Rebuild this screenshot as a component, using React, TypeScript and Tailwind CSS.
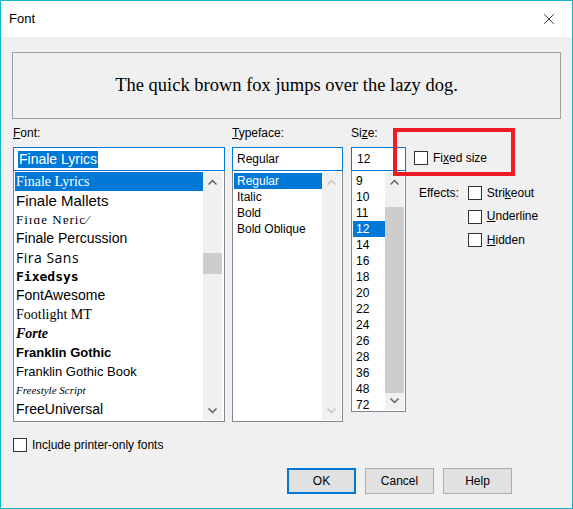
import { X } from 'lucide-react';

const UI = "font-['Liberation_Sans',Arial,sans-serif]";

const FONTS = [
    { name: 'Finale Lyrics', cls: "font-['Liberation_Serif',serif] text-[14px]", selected: true },
    { name: 'Finale Mallets', cls: "font-['Liberation_Sans',sans-serif] text-[15px]" },
    { name: 'Fiɪɑe Nɐric⁄', cls: "font-['Liberation_Serif',serif] text-[13px] tracking-[1px] leading-[11px]" },
    { name: 'Finale Percussion', cls: "font-['Liberation_Sans',sans-serif] text-[14px]" },
    { name: 'Fira Sans', cls: "font-['Open_Sans',sans-serif] text-[14px] tracking-[0.5px]" },
    { name: 'Fixedsys', cls: "font-['DejaVu_Sans_Mono',monospace] text-[13px] font-bold" },
    { name: 'FontAwesome', cls: "font-['Liberation_Sans',sans-serif] text-[14px]" },
    { name: 'Footlight MT', cls: "font-['Liberation_Serif',serif] text-[14px]" },
    { name: 'Forte', cls: "font-['Liberation_Serif',serif] text-[14px] font-bold italic" },
    { name: 'Franklin Gothic', cls: "font-['Liberation_Sans',sans-serif] text-[13px] font-bold" },
    { name: 'Franklin Gothic Book', cls: "font-['Liberation_Sans',sans-serif] text-[13px]" },
    { name: 'Freestyle Script', cls: "font-['Liberation_Serif',serif] text-[11px] italic" },
    { name: 'FreeUniversal', cls: "font-['Liberation_Sans',sans-serif] text-[14px]" },
];

const TYPEFACES = ['Regular', 'Italic', 'Bold', 'Bold Oblique'];
const SIZES = ['9', '10', '11', '12', '14', '16', '18', '20', '22', '24', '26', '28', '36', '48', '72'];

function Chevron({ up, disabled }: { up?: boolean; disabled?: boolean }) {
    return (
        <svg width="9" height="6" viewBox="0 0 9 6" className={up ? '' : 'rotate-180'}>
            <path d="M0.5 5.5 L4.5 1.5 L8.5 5.5" fill="none" stroke={disabled ? '#c4c4c4' : '#606060'} strokeWidth="1.5" />
        </svg>
    );
}

function Scrollbar({ thumbTop, thumbHeight, disabled }: { thumbTop?: number; thumbHeight?: number; disabled?: boolean }) {
    return (
        <div className="w-[19px] bg-[#f0f0f0] flex flex-col shrink-0">
            <div className="h-[19px] flex items-center justify-center"><Chevron up disabled={disabled} /></div>
            <div className="flex-1 relative">
                {!disabled && (
                    <div className="absolute left-0 right-0 bg-[#cdcdcd]" style={{ top: thumbTop, height: thumbHeight }} />
                )}
            </div>
            <div className="h-[19px] flex items-center justify-center"><Chevron disabled={disabled} /></div>
        </div>
    );
}

function Check({ label, u }: { label: string; u: number }) {
    return (
        <div className="flex items-center gap-[5px] h-[14px] leading-[15px]">
            <div className="w-[14px] h-[14px] border border-[#333333] bg-white shrink-0" />
            <span>
                {label.slice(0, u)}<span className="underline">{label[u]}</span>{label.slice(u + 1)}
            </span>
        </div>
    );
}

export default function App() {
    return (
        <div className={`w-[573px] h-[509px] border border-[#18b4c9] bg-[#f0f0f0] flex flex-col text-[12px] text-black ${UI}`}>
            <div className="h-[36px] bg-white flex items-center justify-between pl-[8px] pr-[14px] shrink-0">
                <span className="text-[13px]">Font</span>
                <X size={18} strokeWidth={1} />
            </div>

            <div className="flex-1 px-[11px] flex flex-col relative">
                <div className="mt-[15px] h-[67px] border border-[#a0a0a0] flex items-center justify-center font-['Liberation_Serif',serif] text-[18.5px]">
                    The quick brown fox jumps over the lazy dog.
                </div>

                <div className="flex mt-[7px]">
                    {/* Font */}
                    <div className="w-[212px] ml-[1px] flex flex-col">
                        <div className="h-[15px] leading-[15px]"><span className="underline">F</span>ont:</div>
                        <div className="mt-[6px] h-[24px] border border-[#0078d7] bg-white flex items-center px-[4px]">
                            <span className="bg-[#0078d7] text-white font-['Liberation_Sans',sans-serif] text-[14px] leading-[17px] px-[1px]">Finale Lyrics</span>
                        </div>
                        <div className="h-[251px] border border-t-0 border-[#828790] bg-white flex">
                            <div className="flex-1 pl-[1px] pt-[1px] overflow-hidden">
                                {FONTS.map((f, i) => (
                                    <div key={i} className={`h-[19px] leading-[19px] pl-[1px] whitespace-nowrap overflow-hidden ${f.cls} ${f.selected ? 'bg-[#0078d7] text-white' : ''}`}>
                                        {f.name}
                                    </div>
                                ))}
                            </div>
                            <div className="flex py-[1px] pr-[2px]">
                                <Scrollbar thumbTop={62} thumbHeight={21} />
                            </div>
                        </div>
                    </div>

                    {/* Typeface */}
                    <div className="w-[111px] ml-[7px] flex flex-col">
                        <div className="h-[15px] leading-[15px]"><span className="underline">T</span>ypeface:</div>
                        <div className="mt-[6px] h-[24px] border border-[#0078d7] bg-white flex items-center px-[4px]">Regular</div>
                        <div className="h-[251px] border border-t-0 border-[#828790] bg-white flex">
                            <div className="flex-1 pl-[1px] pt-[2px]">
                                {TYPEFACES.map((t, i) => (
                                    <div key={t} className={`h-[16px] leading-[16px] pl-[3px] ${i === 0 ? 'bg-[#0078d7] text-white' : ''}`}>{t}</div>
                                ))}
                            </div>
                            <div className="flex py-[1px] pr-[1px]">
                                <Scrollbar disabled />
                            </div>
                        </div>
                    </div>

                    {/* Size */}
                    <div className="w-[55px] ml-[8px] flex flex-col">
                        <div className="h-[15px] leading-[15px]">Si<span className="underline">z</span>e:</div>
                        <div className="mt-[6px] h-[24px] border border-[#0078d7] bg-white flex items-center px-[5px]">12</div>
                        <div className="h-[241px] border border-t-0 border-[#828790] bg-white flex">
                            <div className="flex-1 pl-[1px] pt-[2px]">
                                {SIZES.map(s => (
                                    <div key={s} className={`h-[16px] leading-[16px] pl-[3px] ${s === '12' ? 'bg-[#0078d7] text-white' : ''}`}>{s}</div>
                                ))}
                            </div>
                            <div className="flex py-[1px] pr-[1px]">
                                <Scrollbar thumbTop={16} thumbHeight={186} />
                            </div>
                        </div>
                    </div>

                    {/* Options */}
                    <div className="flex flex-col ml-[7px]">
                        <div className="mt-[25px] ml-[1px]"><Check label="Fixed size" u={2} /></div>
                        <div className="mt-[21px] flex">
                            <span className="ml-[6px] leading-[14px]">Effects:</span>
                            <div className="ml-[9px] flex flex-col gap-[9.5px]">
                                <Check label="Strikeout" u={4} />
                                <Check label="Underline" u={0} />
                                <Check label="Hidden" u={0} />
                            </div>
                        </div>
                    </div>
                </div>

                <div className="mt-[16px] ml-[1px]"><Check label="Include printer-only fonts" u={3} /></div>

                <div className="mt-[16px] flex gap-[9px] ml-[275px]">
                    <button className="w-[69px] h-[26px] border-2 border-[#0078d7] bg-[#e1e1e1]">OK</button>
                    <button className="w-[69px] h-[26px] border border-[#adadad] bg-[#e1e1e1]">Cancel</button>
                    <button className="w-[69px] h-[26px] border border-[#adadad] bg-[#e1e1e1]">Help</button>
                </div>

                <div className="absolute left-[392px] top-[91px] w-[122px] h-[48px] border-[4px] border-[#ed1c24]" />
            </div>
        </div>
    );
}
